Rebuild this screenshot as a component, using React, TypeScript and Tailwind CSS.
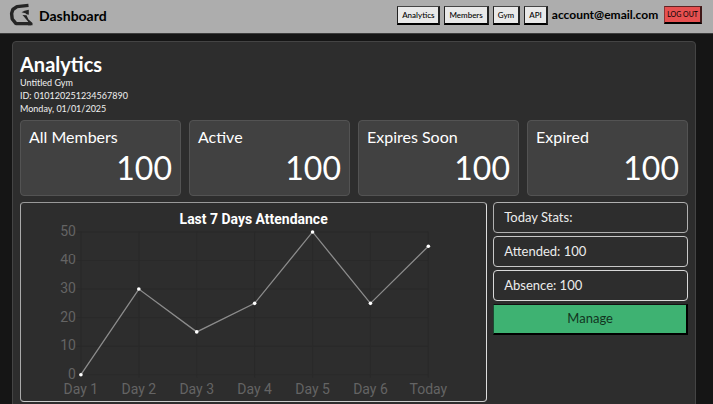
import React from 'react';
import clsx from 'clsx';

const navItems = ['Analytics', 'Members', 'Gym', 'API'];

const memberStats = [
  { label: 'All Members', value: 100 },
  { label: 'Active', value: 100 },
  { label: 'Expires Soon', value: 100 },
  { label: 'Expired', value: 100 },
];

const attendance = [
  { day: 'Day 1', count: 0 },
  { day: 'Day 2', count: 30 },
  { day: 'Day 3', count: 15 },
  { day: 'Day 4', count: 25 },
  { day: 'Day 5', count: 50 },
  { day: 'Day 6', count: 25 },
  { day: 'Today', count: 45 },
];

const ticks = [0, 10, 20, 30, 40, 50];

const toX = (index: number) => 60 + index * 58;
const toY = (count: number) => 172 - (count / 50) * 143;

const Logo: React.FC = () => (
  <svg viewBox="0 0 25 24" className="h-6 w-[25px]" fill="none" aria-hidden="true">
    <path d="M20.500 2.400L9 3.600L4.800 6.500L3.600 10.500L4.200 16L8 20.600H23" stroke="#252525" strokeWidth="3.400" strokeLinejoin="bevel" />
    <path d="M13.500 9.300L16.500 7.700L20.800 6.700V11.700L18.500 11.200L17.500 10.200Z" fill="#252525" />
    <path d="M14.500 12L18.500 12.300L20.500 16.500L24.500 20V22.300H20L20 18.500Z" fill="#252525" />
  </svg>
);

const Header: React.FC = () => (
  <header className="flex h-[34px] items-center justify-between border-b border-[#3c3c3c] bg-[#adadad] pr-[11px] pb-[3px] pl-2 text-black">
    <div className="flex items-center gap-[6px]">
      <Logo />
      <span className="text-[14px] font-bold">Dashboard</span>
    </div>
    <div className="flex items-center gap-1">
      <nav className="flex gap-1">
        {navItems.map((item) => (
          <button
            key={item}
            type="button"
            className="h-[19px] border-t border-r-2 border-b-2 border-l border-t-[#444] border-r-[#222] border-b-black border-l-[#222] bg-[#e9e9e9] px-1 text-[8px] leading-none font-medium"
          >
            {item}
          </button>
        ))}
      </nav>
      <span className="text-[12px] font-bold">account@email.com</span>
      <button
        type="button"
        className="ml-[2px] h-[18px] border-t border-r-2 border-b-2 border-l border-t-[#5d2525] border-r-[#401818] border-b-black border-l-[#8b3535] bg-[#e65050] px-[2px] text-[7px] leading-none"
      >
        LOG OUT
      </button>
    </div>
  </header>
);

const AttendanceChart: React.FC = () => (
  <svg viewBox="0 0 466 198" className="block w-full font-[Roboto,sans-serif]" role="img" aria-label="Last 7 Days Attendance">
    <text x="233" y="21" textAnchor="middle" fontSize="14" fontWeight="700" fill="#fff">
      Last 7 Days Attendance
    </text>
    {ticks.map((tick) => (
      <g key={tick}>
        <line x1="55" x2={toX(6)} y1={toY(tick)} y2={toY(tick)} stroke="#292929" />
        <text x="55" y={toY(tick) + 4} textAnchor="end" fontSize="14" fill="#646464">
          {tick}
        </text>
      </g>
    ))}
    {attendance.map((point, index) => (
      <g key={point.day}>
        <line x1={toX(index)} x2={toX(index)} y1={toY(50)} y2="175" stroke="#292929" />
        <text x={toX(index)} y="191" textAnchor="middle" fontSize="14" fill="#646464">
          {point.day}
        </text>
      </g>
    ))}
    <polyline
      points={attendance.map((point, index) => `${toX(index)},${toY(point.count)}`).join(' ')}
      fill="none"
      stroke="#8c8c8c"
      strokeWidth="1.300"
    />
    {attendance.map((point, index) => (
      <circle key={point.day} cx={toX(index)} cy={toY(point.count)} r="1.800" fill="#fff" />
    ))}
  </svg>
);

const StatRow: React.FC<{ children: React.ReactNode; className?: string }> = ({ children, className }) => (
  <div className={clsx('flex h-[31px] items-center rounded border px-[10px] text-[#ececec]', className)}>{children}</div>
);

const App: React.FC = () => {
  return (
    <div className="h-screen overflow-hidden bg-[#151515] font-[Lato,sans-serif] text-white">
      <Header />
      <main className="mt-[7px] mr-[17px] ml-3 min-h-screen rounded-t border border-[#444] bg-[#2d2d2d] px-[7px] pt-[10px]">
        <h1 className="text-[20px] leading-6 font-bold">Analytics</h1>
        <div className="text-[9px] leading-[13px] text-[#f0f0f0]">
          <p>Untitled Gym</p>
          <p>ID: 010120251234567890</p>
          <p>Monday, 01/01/2025</p>
        </div>

        <section className="mt-[5px] grid grid-cols-4 gap-2">
          {memberStats.map((stat) => (
            <div key={stat.label} className="h-[76px] rounded border border-[#535353] bg-[#414141] px-2 pt-[6px]">
              <h2 className="text-[16px] leading-5">{stat.label}</h2>
              <p className="text-right text-[32px] leading-[42px]">{stat.value}</p>
            </div>
          ))}
        </section>

        <section className="mt-[6px] grid grid-cols-[12fr_5fr] items-start gap-[6px]">
          <div className="rounded border border-t-[#999] border-r-[#ddd] border-b-[#ccc] border-l-[#aaa]">
            <AttendanceChart />
          </div>
          <div className="flex flex-col gap-[3px] text-[13px]">
            <StatRow className="border-[#b0b0b0]">Today Stats:</StatRow>
            <StatRow className="border-[#c8c8c8]">Attended: 100</StatRow>
            <StatRow className="border-[#d8d8d8]">Absence: 100</StatRow>
            <button
              type="button"
              className="h-[31px] border-t border-r-2 border-b-2 border-l border-t-[#111] border-r-black border-b-black border-l-[#1c4a32] bg-[#3eb272] text-[#12351f]"
            >
              Manage
            </button>
          </div>
        </section>
      </main>
    </div>
  );
};

export default App;
